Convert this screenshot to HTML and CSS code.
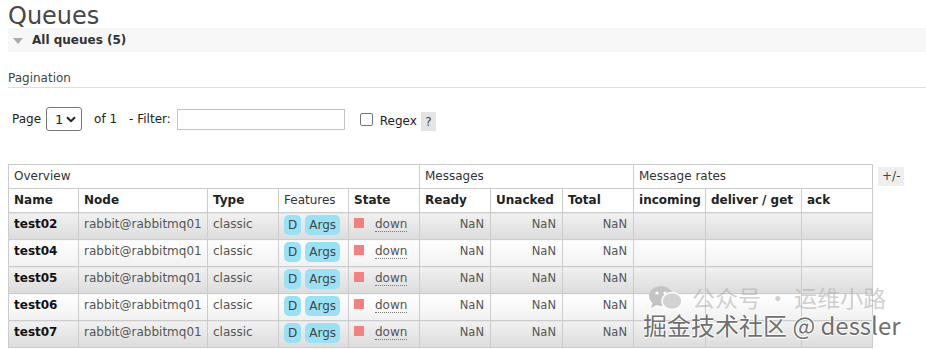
FILE: index.html
```html
<!DOCTYPE html>
<html lang="en">
<head>
    <meta charset="UTF-8">
    <title>Queues</title>
    <link rel="stylesheet" href="styles.css">
</head>
<body>
    <div class="page">
        <h1>Queues</h1>
        <div class="section-head"><span class="toggle"></span>All queues (5)</div>
        <h3 class="pagination-title">Pagination</h3>
        <div class="pager">
            <span>Page</span>
            <span class="select-box">1
                <svg width="10" height="7" viewBox="0 0 10 7"><path d="M1 1.2 L5 5.2 L9 1.2" fill="none" stroke="#222" stroke-width="2"/></svg>
            </span>
            <span class="of">of 1</span>
            <span>- Filter:</span>
            <input class="filter" type="text">
            <span class="regex"><span class="check"></span>Regex</span>
            <span class="help">?</span>
        </div>
        <div class="list-wrap">
            <table class="list">
                <colgroup>
                    <col class="w70"><col class="w129"><col class="w71"><col class="w70"><col class="w71">
                    <col class="w71"><col class="w72"><col class="w71">
                    <col class="w72"><col class="w96"><col class="w71">
                </colgroup>
                <thead>
                    <tr class="group">
                        <th colspan="5">Overview</th>
                        <th colspan="3">Messages</th>
                        <th colspan="3">Message rates</th>
                    </tr>
                    <tr>
                        <th>Name</th>
                        <th>Node</th>
                        <th>Type</th>
                        <th class="plain">Features</th>
                        <th>State</th>
                        <th>Ready</th>
                        <th>Unacked</th>
                        <th>Total</th>
                        <th>incoming</th>
                        <th>deliver / get</th>
                        <th>ack</th>
                    </tr>
                </thead>
                <tbody>
                    <tr class="alt1">
                        <td class="name">test02</td>
                        <td>rabbit@rabbitmq01</td>
                        <td>classic</td>
                        <td><span class="badge">D</span><span class="badge">Args</span></td>
                        <td><span class="state"></span><abbr>down</abbr></td>
                        <td class="num">NaN</td><td class="num">NaN</td><td class="num">NaN</td>
                        <td></td><td></td><td></td>
                    </tr>
                    <tr class="alt2">
                        <td class="name">test04</td>
                        <td>rabbit@rabbitmq01</td>
                        <td>classic</td>
                        <td><span class="badge">D</span><span class="badge">Args</span></td>
                        <td><span class="state"></span><abbr>down</abbr></td>
                        <td class="num">NaN</td><td class="num">NaN</td><td class="num">NaN</td>
                        <td></td><td></td><td></td>
                    </tr>
                    <tr class="alt1">
                        <td class="name">test05</td>
                        <td>rabbit@rabbitmq01</td>
                        <td>classic</td>
                        <td><span class="badge">D</span><span class="badge">Args</span></td>
                        <td><span class="state"></span><abbr>down</abbr></td>
                        <td class="num">NaN</td><td class="num">NaN</td><td class="num">NaN</td>
                        <td></td><td></td><td></td>
                    </tr>
                    <tr class="alt2">
                        <td class="name">test06</td>
                        <td>rabbit@rabbitmq01</td>
                        <td>classic</td>
                        <td><span class="badge">D</span><span class="badge">Args</span></td>
                        <td><span class="state"></span><abbr>down</abbr></td>
                        <td class="num">NaN</td><td class="num">NaN</td><td class="num">NaN</td>
                        <td></td><td></td><td></td>
                    </tr>
                    <tr class="alt1">
                        <td class="name">test07</td>
                        <td>rabbit@rabbitmq01</td>
                        <td>classic</td>
                        <td><span class="badge">D</span><span class="badge">Args</span></td>
                        <td><span class="state"></span><abbr>down</abbr></td>
                        <td class="num">NaN</td><td class="num">NaN</td><td class="num">NaN</td>
                        <td></td><td></td><td></td>
                    </tr>
                </tbody>
            </table>
            <span class="plus-minus">+/-</span>
        </div>
        <div class="watermark">
            <div class="wm-top">
                <svg class="wm-icon" width="36" height="26" viewBox="0 0 36 26">
                    <ellipse cx="13" cy="11" rx="12" ry="10" fill="#c4c4c4"/>
                    <path d="M5 17 L3 23 L10 19 Z" fill="#c4c4c4"/>
                    <ellipse cx="24" cy="16" rx="10" ry="8.5" fill="#d2d2d2" stroke="#fff" stroke-width="1.5"/>
                    <circle cx="9" cy="8" r="1.6" fill="#fff"/>
                    <circle cx="17" cy="8" r="1.6" fill="#fff"/>
                </svg>
                <span>公众号 · 运维小路</span>
            </div>
            <div class="wm-bottom">掘金技术社区 @ dessler</div>
        </div>
    </div>
</body>
</html>
```

FILE: styles.css
```css
body {
    margin: 0;
    background: #fff;
    color: #333;
    font-family: "DejaVu Sans", Verdana, sans-serif;
    font-size: 12px;
}
.page {
    position: relative;
    padding-left: 8px;
    height: 349px;
    overflow: hidden;
}
h1 {
    margin: 0;
    padding-top: 4px;
    font-size: 24px;
    line-height: 24px;
    font-weight: normal;
    color: #484848;
}
.section-head {
    display: flex;
    align-items: center;
    height: 24px;
    padding: 0 0 0 5px;
    background: #f7f7f7;
    font-weight: bold;
    color: #333;
}
.section-head .toggle {
    width: 0;
    height: 0;
    border-left: 5px solid transparent;
    border-right: 5px solid transparent;
    border-top: 6px solid #aaa;
    margin: 1px 9px 0 0;
}
.pagination-title {
    margin: 18px 0 0 0;
    padding-bottom: 1px;
    font-size: 12px;
    line-height: 16px;
    font-weight: normal;
    color: #444;
    border-bottom: 1px solid #ddd;
}
.pager {
    display: flex;
    align-items: center;
    height: 24px;
    margin-top: 19px;
    padding-left: 4px;
    color: #222;
}
.select-box {
    display: flex;
    align-items: center;
    justify-content: space-between;
    box-sizing: border-box;
    width: 36px;
    height: 24px;
    margin: 0 12px 0 5px;
    padding: 0 5px 0 8px;
    border: 1px solid #767676;
    border-radius: 3px;
    font-size: 13px;
}
.of {
    margin-right: 12px;
}
.filter {
    box-sizing: border-box;
    width: 168px;
    height: 21px;
    margin: 0 0 0 6px;
    border: 1px solid #c4c4c4;
    padding: 0 4px;
}
.regex {
    display: flex;
    align-items: center;
    margin-left: 15px;
    padding-top: 4px;
}
.check {
    box-sizing: border-box;
    width: 13px;
    height: 13px;
    margin-right: 7px;
    margin-top: -3px;
    border: 1px solid #767676;
    border-radius: 2px;
    background: #fff;
}
.help {
    display: flex;
    align-items: center;
    justify-content: center;
    width: 15px;
    height: 19px;
    margin: 5px 0 0 4px;
    background: #e4e4e4;
    color: #444;
}
.list-wrap {
    display: flex;
    align-items: flex-start;
    margin-top: 33px;
}
table.list {
    border-collapse: collapse;
    table-layout: fixed;
    width: 864px;
}
.w70 { width: 70px; }
.w71 { width: 71px; }
.w72 { width: 72px; }
.w96 { width: 96px; }
.w129 { width: 129px; }
table.list th,
table.list td {
    border: 1px solid #ccc;
    padding: 3px 5px;
    line-height: 17px;
    text-align: left;
    vertical-align: top;
    white-space: nowrap;
    overflow: hidden;
}
table.list th {
    color: #222;
    background: #fff;
}
table.list tr.group th,
table.list th.plain {
    font-weight: normal;
    color: #333;
}
table.list td {
    padding-bottom: 6px;
    color: #555;
}
table.list td.name {
    font-weight: bold;
    color: #111;
}
table.list td.num {
    text-align: right;
    font-size: 11.5px;
    padding-right: 6px;
}
tr.alt1 td {
    background: linear-gradient(#f1f1f1, #dcdcdc);
}
tr.alt2 td {
    background: linear-gradient(#fff, #f1f1f1);
}
.badge {
    display: inline-block;
    height: 20px;
    line-height: 21px;
    margin: -1px 4px -3px 0;
    padding: 0 4px;
    vertical-align: top;
    border-radius: 5px;
    background: #99e2f6;
    color: #444;
}
.state {
    display: inline-block;
    width: 10px;
    height: 10px;
    margin: 2px 11px 0 0;
    vertical-align: top;
    background: #f68080;
}
abbr {
    text-decoration: none;
    border-bottom: 1px dotted #777;
}
.plus-minus {
    margin: 3px 0 0 5px;
    padding: 0 4px;
    height: 19px;
    line-height: 19px;
    background: #eee;
    color: #444;
}
.watermark {
    position: absolute;
    left: 643px;
    top: 285px;
    font-family: "Noto Sans CJK SC", "DejaVu Sans", sans-serif;
    pointer-events: none;
}
.wm-top {
    display: flex;
    align-items: center;
    height: 25px;
    margin-left: 5px;
    font-size: 23px;
    line-height: 25px;
    color: rgba(170, 170, 170, 0.55);
}
.wm-icon {
    margin-right: 8px;
}
.wm-bottom {
    margin-top: 1px;
    font-size: 24px;
    line-height: 28px;
    color: #707070;
    text-shadow: 1px 0 0 #fff, -1px 0 0 #fff, 0 1px 0 #fff, 0 -1px 0 #fff;
}
```
